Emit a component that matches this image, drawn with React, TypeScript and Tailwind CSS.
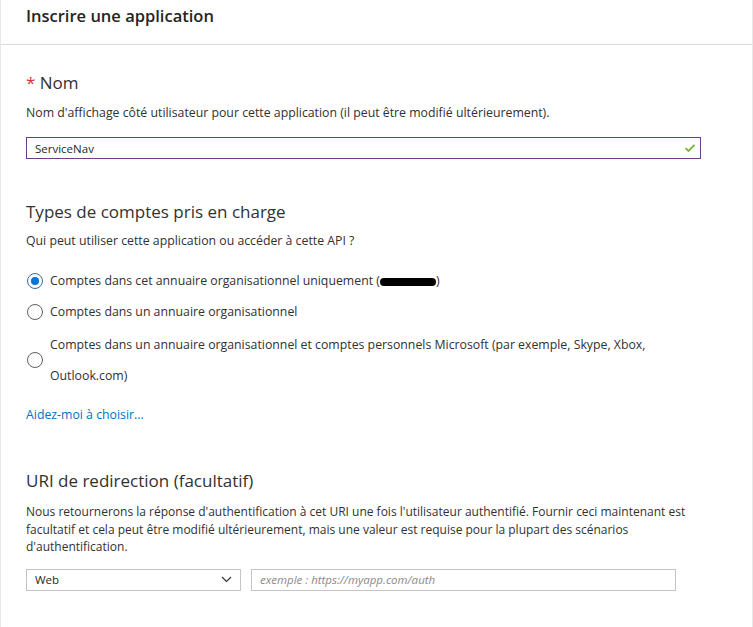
import React, { useState } from 'react';

const FONT = { fontFamily: '"Open Sans", "Noto Sans", sans-serif' };

type Opt = { id: string; lines: string[]; redacted?: boolean };

const OPTIONS: Opt[] = [
  { id: 'single', lines: ['Comptes dans cet annuaire organisationnel uniquement ('], redacted: true },
  { id: 'multi', lines: ['Comptes dans un annuaire organisationnel'] },
  {
    id: 'multiPersonal',
    lines: [
      'Comptes dans un annuaire organisationnel et comptes personnels Microsoft (par exemple, Skype, Xbox,',
      'Outlook.com)',
    ],
  },
];

const Radio: React.FC<{ checked: boolean }> = ({ checked }) => (
  <span
    className={
      'flex h-[16px] w-[16px] shrink-0 items-center justify-center rounded-full border ' +
      (checked ? 'border-[#3a6ea5]' : 'border-[#5f5f5f]')
    }
  >
    {checked && <span className="h-[8px] w-[8px] rounded-full bg-[#0078d4]" />}
  </span>
);

const App: React.FC = () => {
  const [name, setName] = useState('ServiceNav');
  const [account, setAccount] = useState('single');
  const [uri, setUri] = useState('');

  return (
    <div style={FONT} className="min-h-[627px] w-[753px] border-x border-[#e8e8e8] bg-white text-[#323130]">
      <div className="flex h-[45px] items-start border-b border-[#dadada] px-[25px] pt-[4px]">
        <h1 className="text-[16.5px] font-semibold leading-[24px] text-[#252423]">Inscrire une application</h1>
      </div>

      <div className="px-[25px]">
        {/* Nom */}
        <h2 className="mt-[26px] text-[17px] leading-[24px] text-[#323130]">
          <span className="text-[#d13438]">*</span> Nom
        </h2>
        <p className="mt-[9px] text-[12.3px] leading-[18px]">
          Nom d'affichage côté utilisateur pour cette application (il peut être modifié ultérieurement).
        </p>
        <div className="mt-[15px] flex h-[22px] w-[675px] items-center border border-[#6e3d86] pl-[8px] pr-[4px]">
          <input
            value={name}
            onChange={e => setName(e.target.value)}
            className="h-full flex-1 bg-transparent text-[11.5px] text-[#1f1f1f] outline-none"
          />
          <svg width="12" height="10" viewBox="0 0 12 10">
            <path d="M1.5 5.2 L4.5 8 L10.5 1.8" fill="none" stroke="#7ab33a" strokeWidth="1.8" />
          </svg>
        </div>

        {/* Types de comptes */}
        <h2 className="mt-[41px] text-[17px] leading-[24px]">Types de comptes pris en charge</h2>
        <p className="mt-[8px] text-[12.3px] leading-[18px]">Qui peut utiliser cette application ou accéder à cette API ?</p>

        <div className="mt-[19px] flex flex-col">
          {OPTIONS.map((o, i) => (
            <label
              key={o.id}
              onClick={() => setAccount(o.id)}
              className={
                'flex cursor-pointer items-center gap-[7px] pl-[1px] ' +
                (i === 0 ? '' : i === 1 ? 'mt-[7px]' : 'mt-[5px]')
              }
            >
              <Radio checked={account === o.id} />
              <span className={'text-[12.3px] ' + (o.lines.length > 1 ? 'leading-[31px]' : 'leading-[24px]')}>
                {o.lines.map((l, j) => (
                  <span key={j} className="block">
                    {l}
                    {o.redacted && (
                      <>
                        <span className="inline-block h-[8px] w-[56px] rounded-full bg-black align-middle" />)
                      </>
                    )}
                  </span>
                ))}
              </span>
            </label>
          ))}
        </div>

        <a href="#" className="mt-[15px] block text-[12.3px] leading-[18px] text-[#0072c6]">
          Aidez-moi à choisir...
        </a>

        {/* URI de redirection */}
        <h2 className="mt-[45px] text-[17px] leading-[24px]">URI de redirection (facultatif)</h2>
        <p className="mt-[10px] w-[690px] text-[12px] leading-[17.5px]">
          Nous retournerons la réponse d'authentification à cet URI une fois l'utilisateur authentifié. Fournir ceci
          maintenant est facultatif et cela peut être modifié ultérieurement, mais une valeur est requise pour la plupart
          des scénarios d'authentification.
        </p>
        <div className="mt-[13px] flex gap-[10px]">
          <div className="flex h-[22px] w-[215px] items-center justify-between border border-[#c4c4c4] pl-[8px] pr-[8px]">
            <span className="text-[11.5px] text-[#1f1f1f]">Web</span>
            <svg width="11" height="7" viewBox="0 0 11 7">
              <path d="M1 1 L5.5 5.5 L10 1" fill="none" stroke="#333" strokeWidth="1.2" />
            </svg>
          </div>
          <input
            value={uri}
            onChange={e => setUri(e.target.value)}
            placeholder="exemple : https://myapp.com/auth"
            className="h-[22px] w-[425px] border border-[#c4c4c4] px-[8px] text-[11.5px] italic outline-none placeholder:text-[#8a8a8a]"
          />
        </div>
      </div>
    </div>
  );
};

export default App;
